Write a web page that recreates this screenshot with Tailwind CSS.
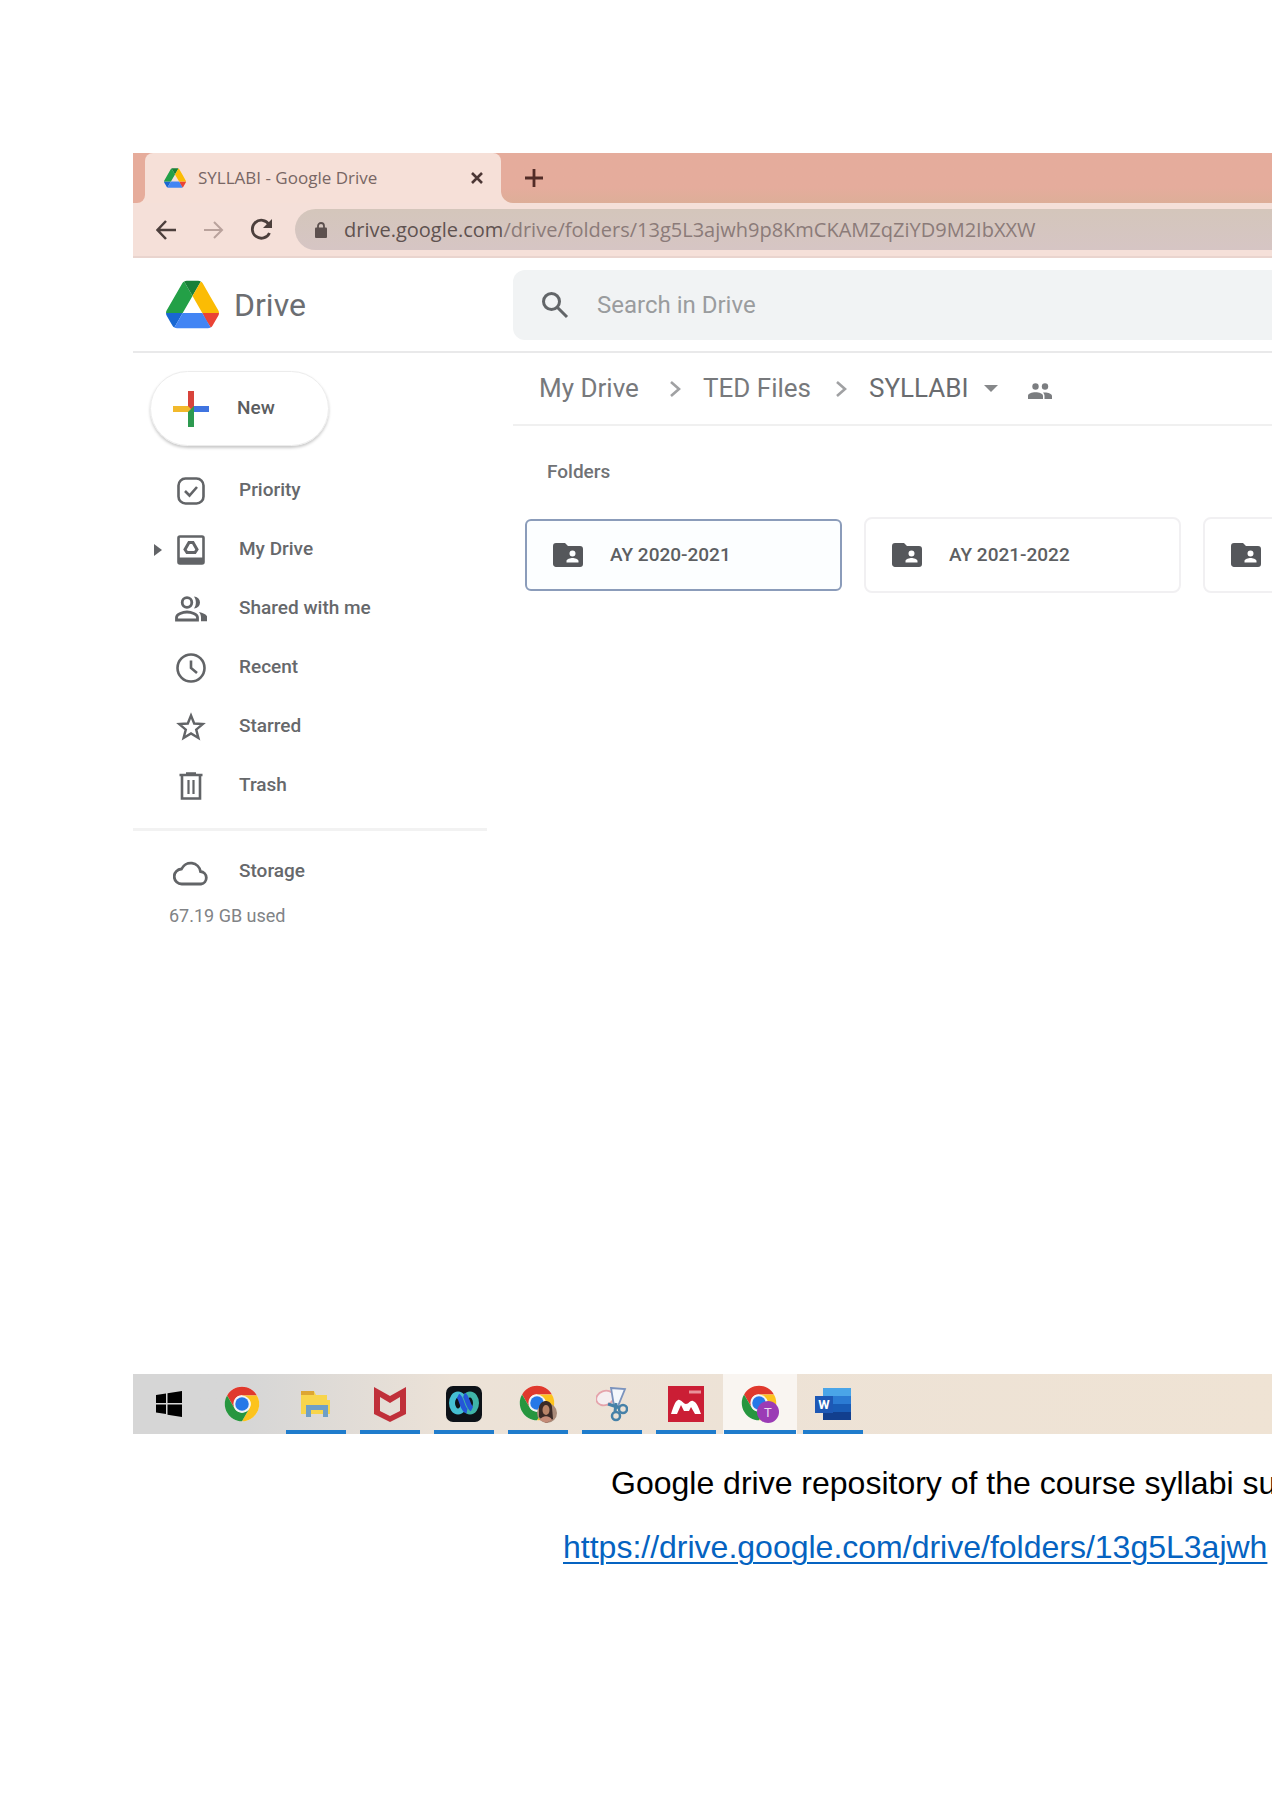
<!DOCTYPE html>
<html lang="en">
<head>
<meta charset="utf-8">
<meta name="viewport" content="width=device-width, initial-scale=1">
<title>SYLLABI - Google Drive</title>
<script src="https://cdn.jsdelivr.net/npm/@tailwindcss/browser@4"></script>
</head>
<body class="bg-white font-[Roboto,sans-serif] text-[#66686b]">
<svg class="hidden" aria-hidden="true">
  <symbol id="drive" viewBox="0 0 87.3 78">
    <path d="m6.6 66.85 3.85 6.65c.8 1.4 1.95 2.5 3.3 3.3l13.75-23.8h-27.5c0 1.55.4 3.1 1.2 4.5z" fill="#1967d2"/>
    <path d="m43.65 25-13.75-23.8c-1.35.8-2.5 1.9-3.3 3.3l-25.4 44a9.06 9.06 0 0 0 -1.2 4.5h27.5z" fill="#23a047"/>
    <path d="m73.55 76.8c1.35-.8 2.5-1.9 3.3-3.3l1.6-2.75 7.65-13.25c.8-1.4 1.2-2.95 1.2-4.5h-27.5l5.85 11.5z" fill="#ea4335"/>
    <path d="m43.65 25 13.75-23.8c-1.35-.8-2.9-1.2-4.5-1.2h-18.5c-1.6 0-3.15.45-4.5 1.2z" fill="#188038"/>
    <path d="m59.8 53h-32.3l-13.75 23.8c1.35.8 2.9 1.2 4.5 1.2h50.8c1.6 0 3.15-.45 4.5-1.2z" fill="#4285f4"/>
    <path d="m73.4 26.5-12.7-22c-.8-1.4-1.95-2.5-3.3-3.3l-13.75 23.8 16.15 28h27.45c0-1.55-.4-3.1-1.2-4.5z" fill="#fbbc04"/>
  </symbol>
  <symbol id="chrome" viewBox="0 0 48 48">
    <circle cx="24" cy="24" r="23" fill="#fff"/>
    <path d="M4.1 12.5A23 23 0 0 1 43.9 12.5H24A11.5 11.5 0 0 0 14 18.3L14 29.7Z" fill="#e0392d"/>
    <path d="M43.9 12.5A23 23 0 0 1 24 47L34 29.7A11.5 11.5 0 0 0 34 18.3L24 12.5Z" fill="#fcc31e"/>
    <path d="M4.1 12.5A23 23 0 0 0 24 47L34 29.7A11.5 11.5 0 0 1 14 29.7Z" fill="#27963f"/>
    <circle cx="24" cy="24" r="11.5" fill="#f4f4f4"/><circle cx="24" cy="24" r="9" fill="#2578e8"/>
  </symbol>
  <symbol id="shared-folder" viewBox="2 4 20 16">
    <path fill="#55575b" d="M20 6h-8l-2-2H4a2 2 0 0 0-2 2v12c0 1.100.9 2 2 2h16a2 2 0 0 0 2-2V8a2 2 0 0 0-2-2zm-5 3a2 2 0 1 1 0 4 2 2 0 0 1 0-4zm4 8h-8v-1c0-1.330 2.670-2 4-2s4 .67 4 2z"/>
  </symbol>
</svg>

<main class="overflow-hidden pt-[153px] pl-[133px]">
  <section aria-label="Browser window" class="flex flex-col">
    <div class="flex h-[50px] bg-[#f6e0d8]">
      <div class="w-3 rounded-br-lg bg-[#e6ac9b]"></div>
      <div class="w-[356px] shrink-0 bg-linear-to-b from-[#e5ac9c] from-50% to-[#f6e0d8] to-50%">
        <div class="flex h-full items-center rounded-t-lg bg-[#f6e0d8] pr-3.5 pl-[19px]">
          <svg class="h-5 w-[22px]"><use href="#drive"/></svg>
          <span class="ml-3 flex-1 whitespace-nowrap font-['Open_Sans',sans-serif] text-[17px] leading-6 text-[#786664]">SYLLABI - Google Drive</span>
          <button aria-label="Close tab" class="grid size-5 place-items-center"><svg class="size-3" viewBox="0 0 12 12"><path d="M1 1l10 10M11 1L1 11" stroke="#4c3735" stroke-width="2.600"/></svg></button>
        </div>
      </div>
      <div class="flex flex-1 items-center rounded-bl-xl bg-linear-to-b from-[#e5ac9c] from-70% to-[#ddae98] pl-[23px]">
        <button aria-label="New tab" class="grid size-5 place-items-center"><svg class="size-[18px]" viewBox="0 0 18 18"><path d="M9 0v18M0 9h18" stroke="#522c27" stroke-width="2.800"/></svg></button>
      </div>
    </div>

    <div class="flex h-[55px] items-center border-b-2 border-[#e9d4ce] bg-[#f5e0d9] pl-[23px]">
      <button aria-label="Back" class="mr-[28px]"><svg class="h-5 w-5" viewBox="0 0 20 20" fill="none" stroke="#4c3f3c" stroke-width="2.500"><path d="M20 10H2M10 1L1.500 10L10 19"/></svg></button>
      <button aria-label="Forward" class="mr-[26px]"><svg class="h-5 w-5" viewBox="0 0 20 20" fill="none" stroke="#b9a29c" stroke-width="2"><path d="M0 10H18M10 2L18 10L10 18"/></svg></button>
      <button aria-label="Reload" class="mr-[22px]"><svg class="size-[23px]" viewBox="0 0 23 23" fill="none" stroke="#4c3f3c" stroke-width="2.800"><path d="M19 6.500A9 9 0 1 0 19.500 15"/><path d="M22 1v9h-9z" fill="#4c3f3c" stroke="none"/></svg></button>
      <div class="flex h-[41px] flex-1 items-center rounded-l-full bg-linear-to-b from-[#d4c6bb] to-[#d6c5c4] pl-5">
        <svg class="h-4 w-3" viewBox="0 0 12 16"><path d="M3 7V4a3 3 0 0 1 6 0v3" fill="none" stroke="#5c504e" stroke-width="1.800"/><rect y="5.500" width="12" height="10.500" rx="1" fill="#5c504e"/></svg>
        <p class="ml-[17px] whitespace-nowrap font-['Open_Sans',sans-serif] text-xl text-[#8b7b79]"><span class="text-[#5f5250]">drive.google.com</span>/drive/folders/13g5L3ajwh9p8KmCKAMZqZiYD9M2IbXXW</p>
      </div>
    </div>

    <header class="flex h-[95px] items-center border-b-2 border-[#e9e9ea]">
      <a href="#" class="flex w-[380px] items-center pl-[33px]">
        <svg class="h-[49px] w-[53px]"><use href="#drive"/></svg>
        <span class="ml-[15px] text-[32px] text-[#6c6e72]">Drive</span>
      </a>
      <label class="flex h-[70px] flex-1 items-center rounded-l-xl bg-[#f1f3f4] pl-7">
        <svg class="size-7 shrink-0" viewBox="0 0 28 28" fill="none" stroke="#626568" stroke-width="3"><circle cx="10.500" cy="10.500" r="8"/><path d="M16.500 16.500L26 26"/></svg>
        <input type="search" aria-label="Search in Drive" placeholder="Search in Drive" class="ml-7 w-full bg-transparent text-2xl placeholder:text-[#9a9c9e]">
      </label>
    </header>

    <div class="flex h-[1021px]">
      <aside class="w-[354px] shrink-0 pt-[18px]">
        <button class="ml-[17px] flex h-[75px] w-[179px] items-center rounded-full border border-[#ececec] pl-[22px] text-[19px] font-medium text-[#5b5d60] shadow-[0_2px_3px_#c9c9c9]">
          <svg class="size-9" viewBox="0 0 36 36"><path d="M15 0h6v18h-6z" fill="#d8433b"/><path d="M0 15h15l6 6H0z" fill="#f2b92c"/><path d="M21 15h15v6H21z" fill="#3f74e0"/><path d="M15 21l6-6v21h-6z" fill="#2d9a50"/></svg>
          <span class="ml-7">New</span>
        </button>
        <nav aria-label="Drive" class="mt-[15px] text-[19px] font-medium">
          <a href="#" class="flex h-[59px] items-center pl-[42px]">
            <svg class="size-8" viewBox="0 0 32 32" fill="none" stroke="#626467" stroke-width="2.600"><rect x="3.500" y="3.500" width="25" height="25" rx="7"/><path d="M10 16l4.500 4.500L22 12"/></svg>
            <span class="ml-8">Priority</span></a>
          <a href="#" class="flex h-[59px] items-center pl-[21px]">
            <svg class="h-3 w-2" viewBox="0 0 8 12"><path d="M0 0l8 6-8 6z" fill="#626467"/></svg>
            <svg class="ml-[13px] size-8" viewBox="0 0 32 32" fill="none" stroke="#626467" stroke-width="2.600"><rect x="3.500" y="2.500" width="25" height="27" rx="1.500"/><path d="M3 26.500h26" stroke-width="6"/><path d="M14 8.500h4l4 7-2 3h-8l-2-3z" stroke-width="3"/></svg>
            <span class="ml-8">My Drive</span></a>
          <a href="#" class="flex h-[59px] items-center pl-[42px]">
            <svg class="size-8" viewBox="0 0 32 32" fill="none" stroke="#626467" stroke-width="2.800"><circle cx="12" cy="9.500" r="4.800"/><path d="M1.500 27v-2.500c0-3.500 6.500-5.500 10.500-5.500s10.500 2 10.500 5.500V27z"/><path d="M19 3.500a6 6 0 0 1 0 12c2.500-3.500 2.500-8.500 0-12zM24 19c5 1.200 8.500 3 8.500 6v3.200H26v-3.700c0-2-.8-4-2-5.500z" fill="#626467" stroke="none"/></svg>
            <span class="ml-8">Shared with me</span></a>
          <a href="#" class="flex h-[59px] items-center pl-[42px]">
            <svg class="size-8" viewBox="0 0 32 32" fill="none" stroke="#626467" stroke-width="2.600"><circle cx="16" cy="16" r="13.500"/><path d="M16 8.500V16l6 5"/></svg>
            <span class="ml-8">Recent</span></a>
          <a href="#" class="flex h-[59px] items-center pl-[42px]">
            <svg class="size-8" viewBox="0 0 32 32" fill="none" stroke="#626467" stroke-width="2.400"><path d="M16 4.500l3.200 8 8.600.6-6.600 5.500 2.200 8.400L16 22.400 8.600 27l2.200-8.400-6.600-5.500 8.600-.6z"/></svg>
            <span class="ml-8">Starred</span></a>
          <a href="#" class="flex h-[59px] items-center pl-[42px]">
            <svg class="size-8" viewBox="0 0 32 32" fill="none" stroke="#626467" stroke-width="2.600"><path d="M4.500 5h23M11 3.500h10M7 5v23.500h18V5"/><path d="M13.500 10v14M18.500 10v14" stroke-width="2.200"/></svg>
            <span class="ml-8">Trash</span></a>
          <hr class="mt-[13px] border-t-3 border-[#f2f2f2]">
          <a href="#" class="mt-[13px] flex h-[54px] items-center pl-[40px]">
            <svg class="h-8 w-9" viewBox="0 0 36 32" fill="none" stroke="#626467" stroke-width="2.800"><path d="M9 29a7.500 7.500 0 0 1-.5-15A10 10 0 0 1 27.500 16.500 6.300 6.300 0 0 1 28 29z"/></svg>
            <span class="ml-[30px]">Storage</span></a>
        </nav>
        <p class="mt-1 pl-[36px] text-lg text-[#818386]">67.19 GB used</p>
      </aside>

      <div class="ml-[26px] flex min-w-0 flex-1 flex-col">
        <nav aria-label="Breadcrumb" class="flex h-[73px] shrink-0 items-center border-b-2 border-[#f0f0f0] pl-[26px] text-[26px] whitespace-nowrap text-[#77797c]">
          <a href="#" class="w-[130px]">My Drive</a>
          <svg class="h-4 w-3" viewBox="0 0 12 16" fill="none" stroke="#a0a1a3" stroke-width="2.600"><path d="M2 1l8 7-8 7"/></svg>
          <a href="#" class="ml-[22px] w-[132px]">TED Files</a>
          <svg class="h-4 w-3" viewBox="0 0 12 16" fill="none" stroke="#a0a1a3" stroke-width="2.600"><path d="M2 1l8 7-8 7"/></svg>
          <button class="ml-[22px] flex items-center text-[#6a6c6f]">SYLLABI<svg class="ml-[15px] h-[7px] w-3.5" viewBox="0 0 14 7"><path d="M0 0h14L7 7z" fill="#86888a"/></svg></button>
          <svg class="mt-1 ml-[30px] h-4 w-6" viewBox="0 0 24 16" fill="#7b7d80"><circle cx="7.500" cy="3.500" r="3.200"/><circle cx="17" cy="3.500" r="3.200"/><path d="M0 16v-3c0-5 15-5 15 0v3zM16.500 16v-3c0-1.500-.7-2.600-1.500-3.500 4-.5 9 .7 9 3.500v3z"/></svg>
        </nav>
        <h2 class="mt-8 pl-[34px] text-[19px] leading-7 font-medium text-[#707275]">Folders</h2>
        <div class="mt-[31px] ml-3 grid grid-cols-[317px_317px_317px] gap-[22px] text-[19px] font-medium text-[#5d5f62]">
          <a href="#" class="my-[2px] flex h-[72px] items-center rounded-md border-2 border-[#8b9cba] bg-[#fcfeff] pl-[26px]"><svg class="h-6 w-[30px]"><use href="#shared-folder"/></svg><span class="ml-[27px]">AY 2020-2021</span></a>
          <a href="#" class="flex h-[76px] items-center rounded-lg border-2 border-[#f1f0f2] pl-[26px]"><svg class="h-6 w-[30px]"><use href="#shared-folder"/></svg><span class="ml-[27px]">AY 2021-2022</span></a>
          <a href="#" aria-label="Shared folder" class="flex h-[76px] items-center rounded-lg border-2 border-[#f1f0f2] pl-[26px]"><svg class="h-6 w-[30px]"><use href="#shared-folder"/></svg></a>
        </div>
      </div>
    </div>
  </section>

  <footer aria-label="Taskbar" class="flex h-[60px] bg-linear-to-r from-[#d6d6d6] from-10% via-[#ece2d7] via-28% to-[#efe3d4]">
    <button aria-label="Start" class="grid w-[72px] place-items-center"><svg class="size-[26px]" viewBox="0 0 26 26"><path d="M0 4l10-1.500V12H0zM11.500 2.200L26 0v12H11.500zM0 13.500h10V23L0 21.600zM11.500 13.500H26V26l-14.500-2.200z"/></svg></button>
    <button aria-label="Chrome" class="grid w-[74px] place-items-center"><svg class="size-9"><use href="#chrome"/></svg></button>
    <button aria-label="File Explorer" class="flex w-[74px] flex-col items-center"><span class="grid h-14 place-items-center pt-1"><svg class="h-7 w-[30px]" viewBox="0 0 30 28"><path d="M0 1h13l2 4h11v5h3v14H0z" fill="#f8d54c"/><path d="M0 1h13v4H0z" fill="#dda632"/><path d="M5 27V15h22v12h-5v-7H10v7z" fill="#6f9fc6"/></svg></span><span class="h-1 w-[60px] bg-[#1f7ccc]"></span></button>
    <button aria-label="McAfee" class="flex w-[74px] flex-col items-center"><span class="grid h-14 place-items-center pt-1"><svg class="h-9 w-8" viewBox="0 0 32 36"><path d="M0 1l16 9 16-9v27l-16 8-16-8zM6 11v14l10 5 10-5V11l-10 6z" fill="#c0303a" fill-rule="evenodd"/></svg></span><span class="h-1 w-[60px] bg-[#1f7ccc]"></span></button>
    <button aria-label="Webex" class="flex w-[74px] flex-col items-center"><span class="grid h-14 place-items-center pt-1"><svg class="size-9" viewBox="0 0 36 36"><rect width="36" height="36" rx="7" fill="#0d1218"/><g fill="none" stroke-width="6"><ellipse cx="12" cy="17" rx="6" ry="8.500" stroke="#45bfd2"/><ellipse cx="24" cy="17" rx="6" ry="8.500" stroke="#3fb4a8"/><path d="M12 10c4 2 4 14 9 15M18 9c3 1 4 12 8 14" stroke="#2456d8" stroke-width="5"/></g></svg></span><span class="h-1 w-[60px] bg-[#1f7ccc]"></span></button>
    <button aria-label="Chrome, personal profile" class="flex w-[74px] flex-col items-center"><span class="grid h-14 place-items-center pt-1"><svg class="h-[38px] w-[38px]" viewBox="0 0 38 38"><use href="#chrome" width="36" height="36"/><circle cx="28" cy="28" r="10" fill="#a98a78"/><path d="M20 22c2-8 12-8 13 0l1 12-7 4-7-6z" fill="#3b2a26"/><ellipse cx="27" cy="25" rx="3.500" ry="5" fill="#b98468"/><path d="M21 35c2-5 10-5 12 0l-6 3z" fill="#c58b77"/></svg></span><span class="h-1 w-[60px] bg-[#1f7ccc]"></span></button>
    <button aria-label="Snipping Tool" class="flex w-[74px] flex-col items-center"><span class="grid h-14 place-items-center pt-1"><svg class="h-9 w-8" viewBox="0 0 32 36" fill="none" stroke-width="1.800"><ellipse cx="9" cy="12" rx="9" ry="7" transform="rotate(-20 9 12)" stroke="#e5a3ab" fill="#f5eef0"/><path d="M15 2l14 1-7 17-4 0z" fill="#f4f7fb" stroke="#7b93bd"/><circle cx="20" cy="30" r="4" stroke="#4681a8" stroke-width="2.500"/><circle cx="27" cy="23" r="4" stroke="#4681a8" stroke-width="2.500"/><path d="M12 18l12 4M20 17l-1 9" stroke="#4681a8" stroke-width="3"/></svg></span><span class="h-1 w-[60px] bg-[#1f7ccc]"></span></button>
    <button aria-label="Mendeley" class="flex w-[74px] flex-col items-center"><span class="grid h-14 place-items-center pt-1"><svg class="size-9" viewBox="0 0 36 36"><path d="M0 0h36v36H0z" fill="#cb1e35"/><path d="M21 6h12" stroke="#e9919b" stroke-width="3"/><path d="M3 28c2-6 4-13 7-14 3-1 5 4 8 4s4-4 7-3c4 1 6 8 8 13h-6l-4-7-2 4h-5l-3-6-4 9z" fill="#fff"/></svg></span><span class="h-1 w-[60px] bg-[#1f7ccc]"></span></button>
    <button aria-label="Chrome, profile T" class="flex w-[74px] flex-col items-center bg-[#f9f5f1]"><span class="grid h-14 place-items-center pt-1"><svg class="h-[38px] w-[38px]" viewBox="0 0 38 38"><use href="#chrome" width="36" height="36"/><circle cx="27" cy="27" r="11" fill="#9b3bb5"/><text x="27" y="32" text-anchor="middle" font-family="Roboto, sans-serif" font-size="13" fill="#ecd8f1">T</text></svg></span><span class="h-1 w-[72px] bg-[#1f7ccc]"></span></button>
    <button aria-label="Word" class="flex w-[72px] flex-col items-center"><span class="grid h-14 place-items-center pt-1"><svg class="h-8 w-9" viewBox="0 0 36 32"><path d="M8 0h28v8H8z" fill="#4aa5e8"/><path d="M8 8h28v8H8z" fill="#2b7bd3"/><path d="M8 16h28v8H8z" fill="#195cb6"/><path d="M8 24h28v8H8z" fill="#123f8e"/><rect y="8" width="18" height="17" fill="#1d58b5"/><text x="9" y="21" text-anchor="middle" font-family="Roboto, sans-serif" font-weight="700" font-size="13" fill="#fff">W</text></svg></span><span class="h-1 w-[60px] bg-[#1f7ccc]"></span></button>
  </footer>

  <div class="mt-[17px] pb-[210px] font-['Liberation_Sans',Arial,sans-serif] text-[32px] leading-[64px] whitespace-nowrap text-black">
    <p class="pl-[478px]">Google drive repository of the course syllabi su</p>
    <p class="pl-[430px]"><a href="#" class="text-[#0563c1] underline decoration-2 underline-offset-4">https://drive.google.com/drive/folders/13g5L3ajwh</a></p>
  </div>
</main>
</body>
</html>
